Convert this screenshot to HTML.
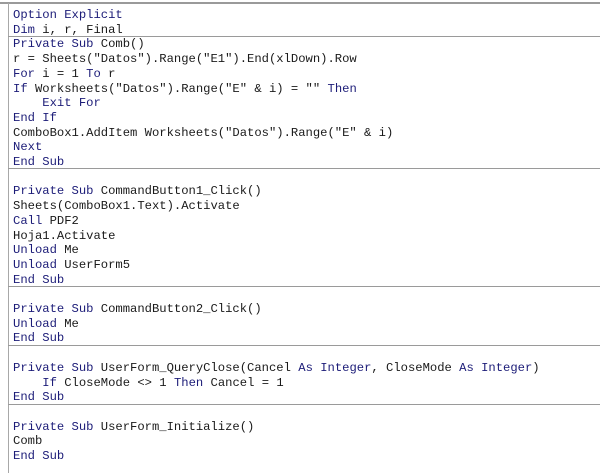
<!DOCTYPE html>
<html><head><style>
html,body{margin:0;padding:0;background:#fff;width:600px;height:473px;overflow:hidden;position:relative}
.top{position:absolute;left:0;top:2px;width:600px;height:2px;background:#9a9a9a}
.left{position:absolute;left:8px;top:3px;width:1px;height:470px;background:#a8a8a8}
.sep{position:absolute;left:8px;width:592px;height:1px;background:#9a9a9a}
pre{position:absolute;left:13px;top:8px;margin:0;font-family:"Liberation Mono",monospace;font-size:12.2px;line-height:14.7px;color:#1a1a1a}
b{font-weight:normal;color:#1c1c78}
</style></head><body>
<div class="top"></div><div class="left"></div>
<div class="sep" style="top:36px"></div>
<div class="sep" style="top:168px"></div>
<div class="sep" style="top:286px"></div>
<div class="sep" style="top:345px"></div>
<div class="sep" style="top:404px"></div>
<pre><b>Option Explicit</b>
<b>Dim</b> i, r, Final
<b>Private Sub</b> Comb()
r = Sheets("Datos").Range("E1").End(xlDown).Row
<b>For</b> i = 1 <b>To</b> r
<b>If</b> Worksheets("Datos").Range("E" &amp; i) = "" <b>Then</b>
    <b>Exit For</b>
<b>End If</b>
ComboBox1.AddItem Worksheets("Datos").Range("E" &amp; i)
<b>Next</b>
<b>End Sub</b>

<b>Private Sub</b> CommandButton1_Click()
Sheets(ComboBox1.Text).Activate
<b>Call</b> PDF2
Hoja1.Activate
<b>Unload</b> Me
<b>Unload</b> UserForm5
<b>End Sub</b>

<b>Private Sub</b> CommandButton2_Click()
<b>Unload</b> Me
<b>End Sub</b>

<b>Private Sub</b> UserForm_QueryClose(Cancel <b>As Integer</b>, CloseMode <b>As Integer</b>)
    <b>If</b> CloseMode &lt;&gt; 1 <b>Then</b> Cancel = 1
<b>End Sub</b>

<b>Private Sub</b> UserForm_Initialize()
Comb
<b>End Sub</b></pre>
</body></html>
